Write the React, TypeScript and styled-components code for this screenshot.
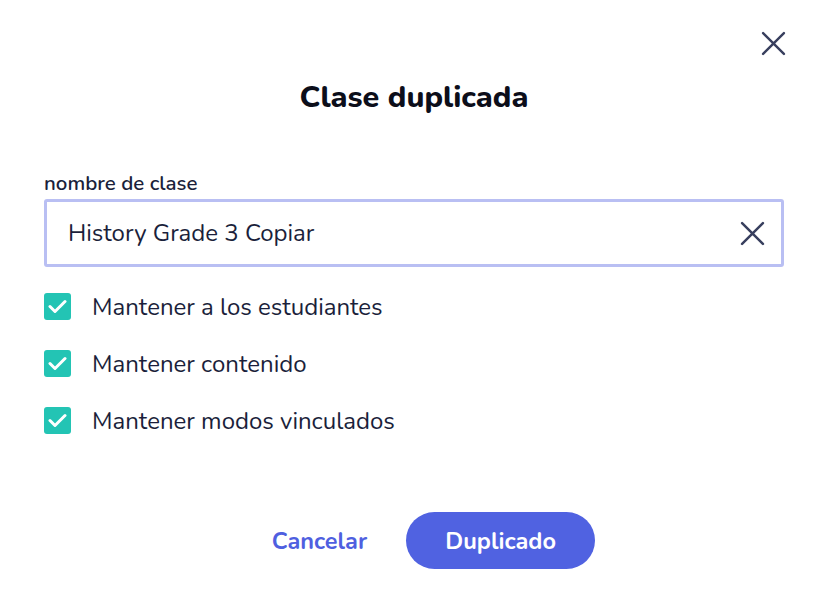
import styled, { createGlobalStyle } from 'styled-components';

const GlobalStyle = createGlobalStyle`
	html, body {
		margin: 0;
		padding: 0;
		background: #ffffff;
	}
	body {
		font-family: 'Nunito', 'Lato', 'Noto Sans', sans-serif;
		color: #1b1f3b;
	}
`;

const Dialog = styled.div`
	position: relative;
	width: 834px;
	height: 614px;
	box-sizing: border-box;
	padding: 80px 50px 0 44px;
	display: flex;
	flex-direction: column;
	background: #ffffff;
`;

const CloseButton = styled.button`
	position: absolute;
	top: 28px;
	right: 46px;
	width: 30px;
	height: 30px;
	padding: 0;
	border: 0;
	background: none;
	display: flex;
	align-items: center;
	justify-content: center;
	cursor: pointer;
`;

const Title = styled.h2`
	margin: 0;
	font-size: 30.5px;
	line-height: 34px;
	font-weight: 800;
	text-align: center;
	color: #0c0e1a;
`;

const Label = styled.label`
	display: block;
	margin-top: 57px;
	margin-bottom: 4px;
	font-size: 20.5px;
	line-height: 24px;
	font-weight: 600;
	color: #1b1f3b;
`;

const InputBox = styled.div`
	height: 68px;
	box-sizing: border-box;
	border: 3px solid #b9bff3;
	border-radius: 3px;
	display: flex;
	align-items: center;
	padding: 0 15px 0 21px;
`;

const TextInput = styled.input`
	flex: 1;
	border: 0;
	outline: none;
	padding: 0;
	font-family: inherit;
	font-size: 24px;
	color: #1b1f3b;
	background: transparent;
`;

const ClearButton = styled.button`
	width: 28px;
	height: 28px;
	padding: 0;
	border: 0;
	background: none;
	display: flex;
	align-items: center;
	justify-content: center;
`;

const Options = styled.div`
	margin-top: 26px;
	display: flex;
	flex-direction: column;
	gap: 30px;
`;

const OptionRow = styled.label`
	display: flex;
	align-items: center;
	gap: 21px;
	height: 27px;
	font-size: 24px;
	color: #1b1f3b;
`;

const Box = styled.span`
	width: 27px;
	height: 27px;
	border-radius: 3px;
	background: #23c4b4;
	display: flex;
	align-items: center;
	justify-content: center;
	flex-shrink: 0;
`;

const Actions = styled.div`
	margin-top: 78px;
	display: flex;
	justify-content: center;
	align-items: center;
`;

const CancelButton = styled.button`
	height: 57px;
	padding: 0 39px;
	border: 0;
	background: none;
	font-family: inherit;
	font-size: 23.5px;
	font-weight: 700;
	color: #4f5fe0;
	cursor: pointer;
`;

const PrimaryButton = styled.button`
	width: 189px;
	height: 57px;
	border: 0;
	border-radius: 29px;
	background: #5062e1;
	color: #ffffff;
	font-family: inherit;
	font-size: 23.5px;
	font-weight: 700;
	cursor: pointer;
`;

const CrossIcon = ({ size, stroke }: { size: number; stroke: number }) => (
	<svg width={size} height={size} viewBox="0 0 24 24" fill="none">
		<path d="M2 2 L22 22 M22 2 L2 22" stroke="#383f5e" strokeWidth={stroke} strokeLinecap="round" />
	</svg>
);

const Check = () => (
	<svg width="19" height="15" viewBox="0 0 19 15" fill="none">
		<path d="M2 7.5 L7 12.5 L17 2.5" stroke="#ffffff" strokeWidth="3" strokeLinecap="round" strokeLinejoin="round" />
	</svg>
);

const options = ['Mantener a los estudiantes', 'Mantener contenido', 'Mantener modos vinculados'];

export default function App() {
	return (
		<>
			<GlobalStyle />
			<Dialog>
				<CloseButton aria-label="Cerrar">
					<CrossIcon size={25} stroke={2.3} />
				</CloseButton>
				<Title>Clase duplicada</Title>
				<Label htmlFor="class-name">nombre de clase</Label>
				<InputBox>
					<TextInput id="class-name" defaultValue="History Grade 3 Copiar" />
					<ClearButton aria-label="Borrar">
						<CrossIcon size={25} stroke={2.4} />
					</ClearButton>
				</InputBox>
				<Options>
					{options.map((text) => (
						<OptionRow key={text}>
							<Box>
								<Check />
							</Box>
							{text}
						</OptionRow>
					))}
				</Options>
				<Actions>
					<CancelButton>Cancelar</CancelButton>
					<PrimaryButton>Duplicado</PrimaryButton>
				</Actions>
			</Dialog>
		</>
	);
}
